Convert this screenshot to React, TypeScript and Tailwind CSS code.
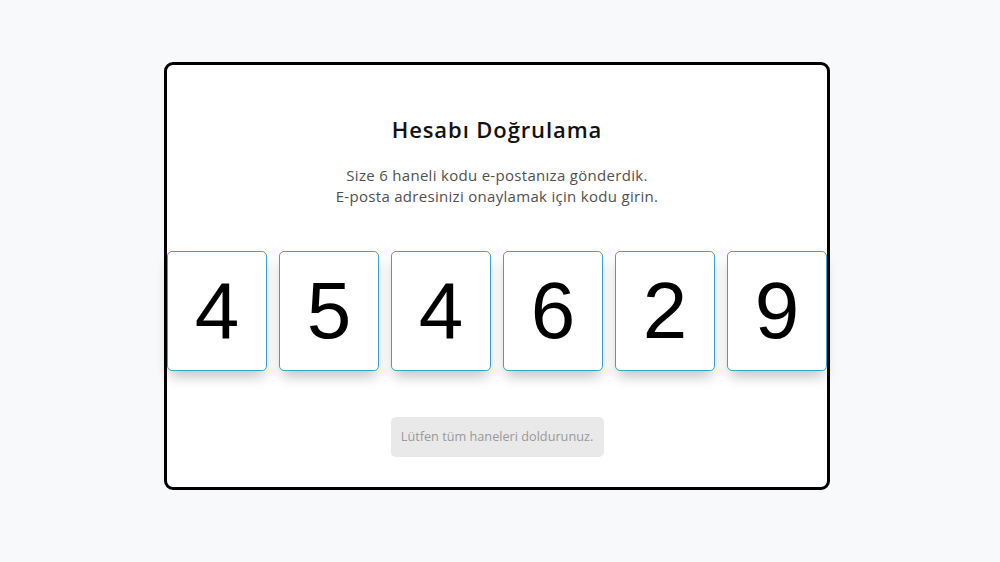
const digits = ["4", "5", "4", "6", "2", "9"];

export default function App() {
  return (
    <div className="flex min-h-[562px] w-full justify-center bg-[#f8f9fb] pr-[6px] pt-[62px] font-['Open_Sans',sans-serif]">
      <div className="flex h-[428px] w-[666px] flex-col items-center rounded-[9px] border-[3px] border-black bg-white pt-[50px]">
        <h1 className="text-[22px] font-semibold leading-[28px] tracking-[0.9px] text-[#111]">
          Hesabı Doğrulama
        </h1>
        <p className="mt-[22px] text-center text-[15px] leading-[21px] tracking-[0.3px] text-[#505050]">
          Size 6 haneli kodu e-postanıza gönderdik.
          <br />
          E-posta adresinizi onaylamak için kodu girin.
        </p>
        <div className="mt-[44px] flex w-full gap-[12px]">
          {digits.map((d, i) => (
            <div
              key={i}
              className="flex h-[120px] w-[100px] items-center justify-center rounded-[5px] border border-[#3aa0d0] bg-white font-['Liberation_Sans',sans-serif] text-[80px] leading-none text-black shadow-[0_8px_14px_-3px_rgba(0,0,0,0.25)]"
            >
              {d}
            </div>
          ))}
        </div>
        <button
          type="button"
          disabled
          className="mt-[46px] h-[40px] w-[213px] rounded-[5px] bg-[#e9e9e9] text-[12.7px] text-[#999]"
        >
          Lütfen tüm haneleri doldurunuz.
        </button>
      </div>
    </div>
  );
}
